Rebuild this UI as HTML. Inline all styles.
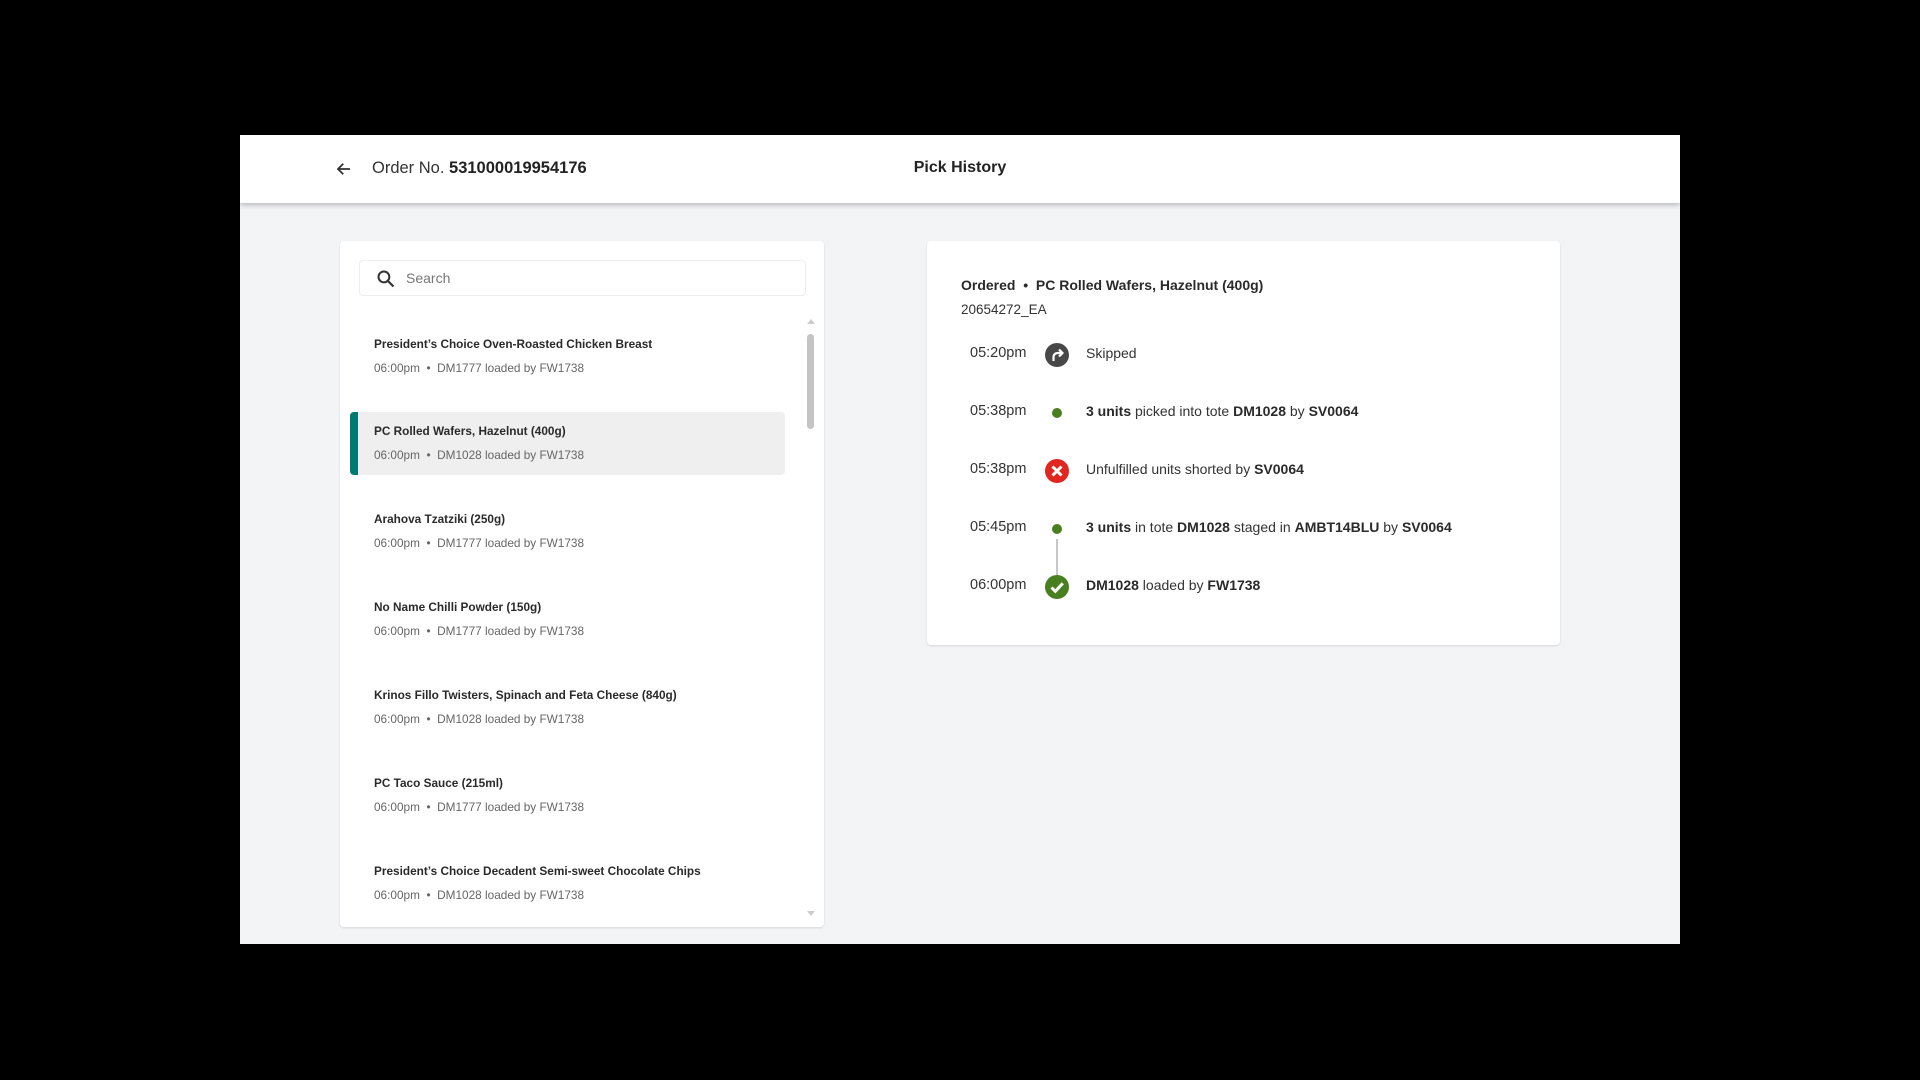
<!DOCTYPE html>
<html><head><meta charset="utf-8"><style>
*{box-sizing:border-box;margin:0;padding:0}
body{width:1920px;height:1080px;background:#000;font-family:"Liberation Sans",sans-serif;color:#2b2b2b;position:relative;overflow:hidden}
.modal{position:absolute;left:240px;top:135px;width:1440px;height:809px;background:#f3f4f6;overflow:hidden}
.hdr{position:absolute;left:0;top:0;width:1440px;height:68px;background:#fff;box-shadow:0 2px 5px rgba(0,0,0,.25);z-index:2}
.hdr .arrow{position:absolute;left:95px;top:25px}
.hdr .ord{position:absolute;left:132px;top:24px;font-size:16.5px;color:#333}
.hdr .ord b{font-weight:bold;color:#222}
.hdr .title{position:absolute;left:0;width:1440px;text-align:center;top:24px;font-size:16px;font-weight:bold;color:#222}
.card{position:absolute;background:#fff;border-radius:4px;box-shadow:0 1px 2px rgba(0,0,0,.12)}
.left{left:100px;top:106px;width:484px;height:686px}
.search{position:absolute;left:19px;top:19px;width:447px;height:36px;border:1px solid #eceef0;border-radius:4px}
.search svg{position:absolute;left:16px;top:8px}
.search span{position:absolute;left:46px;top:9px;font-size:14px;color:#777}
.item{position:absolute;left:10px;width:435px;height:63px;border-radius:3px}
.item.sel{background:#efefef;border-left:8px solid #017a72;border-radius:4px}
.item .t{position:absolute;left:24px;top:9px;font-size:11.8px;font-weight:bold;color:#2a2a2a;white-space:nowrap}
.item .s{position:absolute;left:24px;top:33px;font-size:11.8px;color:#666;white-space:nowrap}
.item.sel .t{left:16px;top:12px}
.item.sel .s{left:16px;top:36px}
.sb{position:absolute;left:467px;top:93px;width:7px;height:95px;background:#c4c4c4;border-radius:4px}
.up{position:absolute;left:467px;top:78px;width:0;height:0;border-left:4px solid transparent;border-right:4px solid transparent;border-bottom:5px solid #ccc}
.dn{position:absolute;left:467px;top:670px;width:0;height:0;border-left:4px solid transparent;border-right:4px solid transparent;border-top:5px solid #ccc}
.right{left:687px;top:106px;width:633px;height:404px}
.h1{position:absolute;left:34px;top:36px;font-size:14px;font-weight:bold;color:#2a2a2a}
.h2{position:absolute;left:34px;top:61px;font-size:13.5px;color:#333}
.row{position:absolute;left:0;width:633px;height:30px}
.row .tm{position:absolute;left:43px;top:7px;font-size:14.5px;color:#333}
.row .ic{position:absolute;left:118px;top:5px;width:24px;height:24px}
.row .dot{position:absolute;left:125px;top:12px;width:10px;height:10px;border-radius:50%;background:#4a7f1f}
.row .tx{position:absolute;left:159px;top:7px;font-size:14px;color:#333;white-space:nowrap}
.row .tx b{color:#2a2a2a}
.line{position:absolute;left:129px;top:298px;width:2px;height:37px;background:#c8c8c8}
</style></head><body>
<div class="modal">
 <div class="hdr">
  <svg class="arrow" width="18" height="18" viewBox="0 0 24 24"><path d="M20 12H5M11 5l-7 7 7 7" fill="none" stroke="#333" stroke-width="2.4"/></svg>
  <div class="ord">Order No. <b>531000019954176</b></div>
  <div class="title">Pick History</div>
 </div>
 <div class="card left">
  <div class="search">
   <svg width="20" height="20" viewBox="0 0 24 24"><circle cx="9.5" cy="9.5" r="6.5" fill="none" stroke="#333" stroke-width="2.4"/><path d="M14.5 14.5L21 21" stroke="#333" stroke-width="2.6"/></svg>
   <span>Search</span>
  </div>
  <div class="up"></div><div class="sb"></div><div class="dn"></div>
  <div class="item" style="top:87px"><div class="t">President’s Choice Oven-Roasted Chicken Breast</div><div class="s">06:00pm &nbsp;•&nbsp; DM1777 loaded by FW1738</div></div>
  <div class="item sel" style="top:171px;height:63px"><div class="t">PC Rolled Wafers, Hazelnut (400g)</div><div class="s">06:00pm &nbsp;•&nbsp; DM1028 loaded by FW1738</div></div>
  <div class="item" style="top:262px"><div class="t">Arahova Tzatziki (250g)</div><div class="s">06:00pm &nbsp;•&nbsp; DM1777 loaded by FW1738</div></div>
  <div class="item" style="top:350px"><div class="t">No Name Chilli Powder (150g)</div><div class="s">06:00pm &nbsp;•&nbsp; DM1777 loaded by FW1738</div></div>
  <div class="item" style="top:438px"><div class="t">Krinos Fillo Twisters, Spinach and Feta Cheese (840g)</div><div class="s">06:00pm &nbsp;•&nbsp; DM1028 loaded by FW1738</div></div>
  <div class="item" style="top:526px"><div class="t">PC Taco Sauce (215ml)</div><div class="s">06:00pm &nbsp;•&nbsp; DM1777 loaded by FW1738</div></div>
  <div class="item" style="top:614px"><div class="t">President’s Choice Decadent Semi-sweet Chocolate Chips</div><div class="s">06:00pm &nbsp;•&nbsp; DM1028 loaded by FW1738</div></div>
 </div>
 <div class="card right">
  <div class="h1">Ordered &nbsp;•&nbsp; PC Rolled Wafers, Hazelnut (400g)</div>
  <div class="h2">20654272_EA</div>
  <div class="line"></div>
  <div class="row" style="top:97px"><div class="tm">05:20pm</div>
   <svg class="ic" viewBox="0 0 24 24"><circle cx="12" cy="12" r="12" fill="#484848"/><path d="M8.5 18V14a4 4 0 0 1 4-4h4" fill="none" stroke="#fff" stroke-width="2.2"/><path d="M14 6.5l3.5 3.5-3.5 3.5" fill="none" stroke="#fff" stroke-width="2.2"/></svg>
   <div class="tx">Skipped</div></div>
  <div class="row" style="top:155px"><div class="tm">05:38pm</div><div class="dot"></div>
   <div class="tx"><b>3 units</b> picked into tote <b>DM1028</b> by <b>SV0064</b></div></div>
  <div class="row" style="top:213px"><div class="tm">05:38pm</div>
   <svg class="ic" viewBox="0 0 24 24"><circle cx="12" cy="12" r="12" fill="#e0261e"/><path d="M7.5 7.5l9 9M16.5 7.5l-9 9" stroke="#fff" stroke-width="3"/></svg>
   <div class="tx">Unfulfilled units shorted by <b>SV0064</b></div></div>
  <div class="row" style="top:271px"><div class="tm">05:45pm</div><div class="dot"></div>
   <div class="tx"><b>3 units</b> in tote <b>DM1028</b> staged in <b>AMBT14BLU</b> by <b>SV0064</b></div></div>
  <div class="row" style="top:329px"><div class="tm">06:00pm</div>
   <svg class="ic" viewBox="0 0 24 24"><circle cx="12" cy="12" r="12" fill="#4a7f1f"/><path d="M6.5 12.5l3.8 3.8 7.5-8" fill="none" stroke="#fff" stroke-width="3"/></svg>
   <div class="tx"><b>DM1028</b> loaded by <b>FW1738</b></div></div>
 </div>
</div>
</body></html>
